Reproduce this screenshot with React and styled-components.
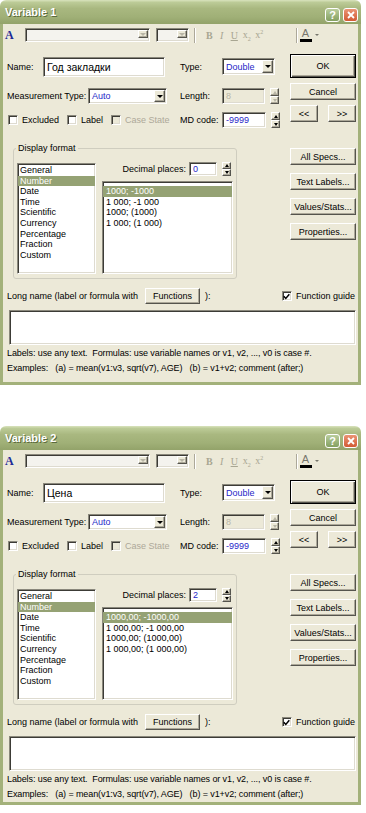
import React from "react";
import styled, { createGlobalStyle, css } from "styled-components";

const GlobalStyle = createGlobalStyle`
  html, body {
    margin: 0;
    padding: 0;
    background: #ffffff;
  }
  body {
    font-family: "Liberation Sans", Arial, sans-serif;
    font-size: 9px;
    color: #000;
  }
`;

const sunken = css`
  border: 1px solid;
  border-color: #8a887c #ffffff #ffffff #8a887c;
  box-shadow: inset 1px 1px 0 #3c3b36, inset -1px -1px 0 #dedbd0;
`;

const raised = css`
  border: 1px solid;
  border-color: #ffffff #55544d #55544d #ffffff;
  box-shadow: inset -1px -1px 0 #aca899;
`;

const Page = styled.div`
  width: 366px;
  display: flex;
  flex-direction: column;
  gap: 41px;
`;

const Window = styled.div`
  width: 361px;
  display: flex;
  flex-direction: column;
`;

const TitleBar = styled.div`
  height: 24px;
  box-sizing: border-box;
  display: flex;
  align-items: center;
  padding: 0 3px 0 5px;
  border-radius: 6px 6px 0 0;
  background: linear-gradient(
    #d9e3bd 0%,
    #bccb97 10%,
    #a9b880 35%,
    #a0b077 70%,
    #93a36a 100%
  );
`;

const Title = styled.div`
  flex: 1;
  font: bold 11px "Liberation Sans", Arial, sans-serif;
  color: #ffffff;
  text-shadow: 1px 1px 0 #5b6a3c;
`;

const CaptionButtons = styled.div`
  display: flex;
  gap: 3px;
  margin-top: 5px;
`;

const CaptionButton = styled.div`
  width: 15px;
  height: 14px;
  box-sizing: border-box;
  border: 1px solid #ffffff;
  border-radius: 3px;
  display: flex;
  align-items: center;
  justify-content: center;
  color: #ffffff;
  font: bold 11px "Liberation Sans", Arial, sans-serif;
  background: ${({ $close }) =>
    $close
      ? "linear-gradient(#eb9474, #d25a34)"
      : "linear-gradient(#b9cd9c, #84a062)"};
`;

const Frame = styled.div`
  background: #ece9d8;
  border: 3px solid #a3b17a;
  border-top: 0;
`;

const Toolbar = styled.div`
  height: 22px;
  display: flex;
  align-items: center;
  padding-left: 2px;
`;

const FontIcon = styled.span`
  width: 12px;
  font: bold 12px "Liberation Serif", serif;
  color: #1d2b96;
`;

const ToolCombo = styled.div`
  ${sunken}
  box-sizing: border-box;
  width: ${({ $w }) => $w}px;
  height: 14px;
  margin-left: ${({ $ml }) => $ml}px;
  background: #f4f3ee;
  display: flex;
  justify-content: flex-end;
  padding: 1px;
`;

const ToolSep = styled.span`
  width: 1px;
  height: 15px;
  margin-left: ${({ $ml }) => $ml}px;
  margin-right: ${({ $mr }) => $mr || 0}px;
  background: #aca899;
  box-shadow: 1px 0 0 #ffffff;
`;

const Glyph = styled.span`
  width: 12.5px;
  text-align: center;
  font-family: "Liberation Serif", serif;
  font-size: 10px;
  color: #a8a692;
  font-weight: ${({ $bold }) => ($bold ? "bold" : "normal")};
  font-style: ${({ $italic }) => ($italic ? "italic" : "normal")};
  text-decoration: ${({ $under }) => ($under ? "underline" : "none")};
  sub, sup {
    font-size: 6px;
  }
`;

const ColorA = styled.span`
  margin-left: 3px;
  width: 12px;
  display: flex;
  flex-direction: column;
  align-items: center;
  font: 11px "Liberation Sans", Arial, sans-serif;
  color: #77766c;
  line-height: 10px;
  &::after {
    content: "";
    width: 12px;
    height: 3px;
    background: #000000;
    margin-top: 1px;
  }
`;

const TinyArrow = styled.span`
  margin-left: 3px;
  width: 0;
  height: 0;
  border-left: 2px solid transparent;
  border-right: 2px solid transparent;
  border-top: 2px solid #77766c;
`;

const Body = styled.div`
  padding: 8px 2px ${({ $pb }) => $pb}px 4px;
`;

const TopArea = styled.div`
  display: flex;
  justify-content: space-between;
  align-items: flex-start;
`;

const Fields = styled.div`
  padding-top: 2px;
  display: flex;
  flex-direction: column;
`;

const FieldRow = styled.div`
  height: ${({ $h }) => $h}px;
  margin-top: ${({ $mt }) => $mt || 0}px;
  display: grid;
  grid-template-columns: 173px 42px auto;
  align-items: center;
`;

const Cell = styled.div`
  display: flex;
  align-items: center;
`;

const Label = styled.span`
  width: ${({ $w }) => ($w ? `${$w}px` : "auto")};
  flex-shrink: 0;
  margin-left: ${({ $ml }) => $ml || 0}px;
  color: ${({ $muted }) => ($muted ? "#aca899" : "#000")};
  white-space: nowrap;
`;

const TextBox = styled.div`
  ${sunken}
  box-sizing: border-box;
  width: ${({ $w }) => $w}px;
  height: ${({ $h }) => $h}px;
  background: ${({ $disabled }) => ($disabled ? "#ece9d8" : "#ffffff")};
  color: ${({ $disabled, $blue }) =>
    $disabled ? "#b8b5a6" : $blue ? "#2626c8" : "#000"};
  font-size: ${({ $fs }) => $fs || 9}px;
  display: flex;
  align-items: center;
  justify-content: space-between;
  padding: 0 1px 0 3px;
  white-space: nowrap;
  overflow: hidden;
`;

const DropButton = styled.span`
  ${raised}
  box-sizing: border-box;
  width: ${({ $w }) => $w || 11}px;
  height: calc(100% - 2px);
  background: #ece9d8;
  display: flex;
  align-items: center;
  justify-content: center;
  &::after {
    content: "";
    border-left: 3px solid transparent;
    border-right: 3px solid transparent;
    border-top: 3px solid ${({ $muted }) => ($muted ? "#b8b5a6" : "#000")};
  }
`;

const Spinner = styled.div`
  width: 9px;
  height: ${({ $h }) => $h || 16}px;
  margin-left: 5px;
  display: flex;
  flex-direction: column;
`;

const SpinHalf = styled.span`
  ${raised}
  box-sizing: border-box;
  flex: 1;
  background: #ece9d8;
  display: flex;
  align-items: center;
  justify-content: center;
  &::after {
    content: "";
    border-left: 2.5px solid transparent;
    border-right: 2.5px solid transparent;
    ${({ $up, $muted }) =>
      $up
        ? `border-bottom: 3px solid ${$muted ? "#b8b5a6" : "#000"};`
        : `border-top: 3px solid ${$muted ? "#b8b5a6" : "#000"};`}
  }
`;

const CheckRow = styled.div`
  display: flex;
  align-items: center;
  padding-left: 1px;
  gap: 8px;
`;

const CheckItem = styled.label`
  display: flex;
  align-items: center;
  gap: 4px;
  margin-right: ${({ $mr }) => $mr || 0}px;
  color: ${({ $muted }) => ($muted ? "#aca899" : "#000")};
  white-space: nowrap;
`;

const Box = styled.span`
  ${sunken}
  box-sizing: border-box;
  width: 10px;
  height: 10px;
  background: ${({ $disabled }) => ($disabled ? "#ece9d8" : "#ffffff")};
  display: flex;
  align-items: center;
  justify-content: center;
`;

const ButtonColumn = styled.div`
  width: 66px;
  display: flex;
  flex-direction: column;
  gap: ${({ $gap }) => $gap}px;
`;

const Button = styled.div`
  box-sizing: border-box;
  width: ${({ $w }) => $w || 66}px;
  height: ${({ $h }) => $h || 17}px;
  margin-left: ${({ $ml }) => $ml || 0}px;
  background: #ece9d8;
  display: flex;
  align-items: center;
  justify-content: center;
  font-size: 9px;
  white-space: nowrap;
  ${({ $default }) =>
    $default
      ? css`
          border: 1px solid #000;
          box-shadow: inset 1px 1px 0 #ffffff, inset -1px -1px 0 #55544d,
            inset -2px -2px 0 #aca899;
        `
      : raised}
`;

const ArrowRow = styled.div`
  display: flex;
  justify-content: space-between;
`;

const MidArea = styled.div`
  margin-top: 20px;
  display: flex;
  justify-content: space-between;
  align-items: flex-start;
`;

const GroupBox = styled.div`
  position: relative;
  box-sizing: border-box;
  margin-left: 6px;
  width: 224px;
  height: 131px;
  border: 1px solid #cfcdbf;
  border-radius: 3px;
  padding: 14px 3px 4px 3px;
  display: flex;
  gap: 6px;
`;

const GroupTitle = styled.span`
  position: absolute;
  top: -6px;
  left: 2px;
  padding: 0 2px;
  line-height: 11px;
  background: #ece9d8;
`;

const ListBox = styled.div`
  ${sunken}
  box-sizing: border-box;
  width: ${({ $w }) => $w}px;
  height: ${({ $h }) => $h}px;
  margin-top: ${({ $mt }) => $mt || 0}px;
  background: #ffffff;
  padding-top: ${({ $pt }) => $pt || 0}px;
  overflow: hidden;
`;

const ListItem = styled.div`
  height: 10.6px;
  line-height: 10.6px;
  padding-left: ${({ $indent }) => $indent}px;
  background: ${({ $selected }) => ($selected ? "#95a274" : "transparent")};
  color: ${({ $selected }) => ($selected ? "#ffffff" : "#000")};
  white-space: nowrap;
`;

const FormatSide = styled.div`
  width: 131px;
  display: flex;
  flex-direction: column;
`;

const DecimalRow = styled.div`
  height: 14px;
  margin-top: -1px;
  padding-right: 2px;
  display: flex;
  align-items: center;
  justify-content: flex-end;
  gap: 3px;
`;

const LongRow = styled.div`
  margin-top: 9px;
  height: 16px;
  display: flex;
  align-items: center;
`;

const Spacer = styled.div`
  flex: 1;
`;

const LongText = styled.div`
  ${sunken}
  box-sizing: border-box;
  margin: 6px 0 0 2px;
  width: 347px;
  height: 35px;
  background: #ffffff;
`;

const Help = styled.div`
  margin-top: 1px;
  line-height: 15px;
  letter-spacing: -0.1px;
  white-space: pre;
`;

const Check = () => (
  <svg width="7" height="7" viewBox="0 0 7 7">
    <path d="M0.8 3.2 L2.8 5.4 L6.3 1.2" fill="none" stroke="#000" strokeWidth="1.5" />
  </svg>
);

const CloseGlyph = () => (
  <svg width="8" height="8" viewBox="0 0 8 8">
    <path d="M1 1 L7 7 M7 1 L1 7" stroke="#fff" strokeWidth="1.8" />
  </svg>
);

const FORMATS = [
  "General",
  "Number",
  "Date",
  "Time",
  "Scientific",
  "Currency",
  "Percentage",
  "Fraction",
  "Custom",
];

const VariableDialog = ({ title, name, decimals, samples, bottom }) => (
  <Window>
    <TitleBar>
      <Title>{title}</Title>
      <CaptionButtons>
        <CaptionButton>?</CaptionButton>
        <CaptionButton $close>
          <CloseGlyph />
        </CaptionButton>
      </CaptionButtons>
    </TitleBar>
    <Frame>
      <Toolbar>
        <FontIcon>A</FontIcon>
        <ToolCombo $w={125} $ml={8}>
          <DropButton $w={10} $muted />
        </ToolCombo>
        <ToolCombo $w={33} $ml={6}>
          <DropButton $w={10} $muted />
        </ToolCombo>
        <ToolSep $ml={5} $mr={8} />
        <Glyph $bold>B</Glyph>
        <Glyph $italic>I</Glyph>
        <Glyph $under>U</Glyph>
        <Glyph>
          x<sub>2</sub>
        </Glyph>
        <Glyph>
          x<sup>2</sup>
        </Glyph>
        <ToolSep $ml={30} />
        <ColorA>A</ColorA>
        <TinyArrow />
      </Toolbar>
      <Body $pb={bottom}>
        <TopArea>
          <Fields>
            <FieldRow $h={21}>
              <Cell>
                <Label $w={36}>Name:</Label>
                <TextBox $w={122} $h={20} $fs={10.5}>
                  {name}
                </TextBox>
              </Cell>
              <Label>Type:</Label>
              <TextBox $w={53} $h={17} $blue>
                <span>Double</span>
                <DropButton />
              </TextBox>
            </FieldRow>
            <FieldRow $h={16} $mt={11}>
              <Cell>
                <Label $w={81}>Measurement Type:</Label>
                <TextBox $w={79} $h={16} $blue>
                  <span>Auto</span>
                  <DropButton />
                </TextBox>
              </Cell>
              <Label>Length:</Label>
              <Cell>
                <TextBox $w={43} $h={16} $disabled>
                  8
                </TextBox>
                <Spinner>
                  <SpinHalf $up $muted />
                  <SpinHalf $muted />
                </Spinner>
              </Cell>
            </FieldRow>
            <FieldRow $h={16} $mt={8}>
              <CheckRow>
                <CheckItem>
                  <Box />
                  Excluded
                </CheckItem>
                <CheckItem>
                  <Box />
                  Label
                </CheckItem>
                <CheckItem $muted>
                  <Box $disabled />
                  Case State
                </CheckItem>
              </CheckRow>
              <Label>MD code:</Label>
              <Cell>
                <TextBox $w={44} $h={16} $blue>
                  -9999
                </TextBox>
                <Spinner>
                  <SpinHalf $up />
                  <SpinHalf />
                </Spinner>
              </Cell>
            </FieldRow>
          </Fields>
          <ButtonColumn $gap={5}>
            <Button $default $h={24}>
              OK
            </Button>
            <Button>Cancel</Button>
            <ArrowRow>
              <Button $w={28}>&lt;&lt;</Button>
              <Button $w={28}>&gt;&gt;</Button>
            </ArrowRow>
          </ButtonColumn>
        </TopArea>
        <MidArea>
          <GroupBox>
            <GroupTitle>Display format</GroupTitle>
            <ListBox $w={79} $h={111} $pt={1}>
              {FORMATS.map((f) => (
                <ListItem key={f} $indent={2} $selected={f === "Number"}>
                  {f}
                </ListItem>
              ))}
            </ListBox>
            <FormatSide>
              <DecimalRow>
                <Label>Decimal places:</Label>
                <Cell>
                  <TextBox $w={28} $h={14} $blue>
                    {decimals}
                  </TextBox>
                  <Spinner $h={14}>
                    <SpinHalf $up />
                    <SpinHalf />
                  </Spinner>
                </Cell>
              </DecimalRow>
              <ListBox $w={131} $h={93} $mt={5} $pt={4}>
                {samples.map((s, i) => (
                  <ListItem key={s} $indent={3} $selected={i === 0}>
                    {s}
                  </ListItem>
                ))}
              </ListBox>
            </FormatSide>
          </GroupBox>
          <ButtonColumn $gap={8}>
            <Button>All Specs...</Button>
            <Button>Text Labels...</Button>
            <Button>Values/Stats...</Button>
            <Button>Properties...</Button>
          </ButtonColumn>
        </MidArea>
        <LongRow>
          <Label>Long name (label or formula with</Label>
          <Button $w={55} $h={16} $ml={7}>
            Functions
          </Button>
          <Label $ml={5}>):</Label>
          <Spacer />
          <CheckItem $mr={1}>
            <Box>
              <Check />
            </Box>
            Function guide
          </CheckItem>
        </LongRow>
        <LongText />
        <Help>
          {"Labels: use any text.  Formulas: use variable names or v1, v2, ..., v0 is case #.\n"}
          {"Examples:   (a) = mean(v1:v3, sqrt(v7), AGE)   (b) = v1+v2; comment (after;)"}
        </Help>
      </Body>
    </Frame>
  </Window>
);

export default function App() {
  return (
    <>
      <GlobalStyle />
      <Page>
        <VariableDialog
          title="Variable 1"
          name="Год закладки"
          decimals="0"
          samples={["1000; -1000", "1 000; -1 000", "1000; (1000)", "1 000; (1 000)"]}
          bottom={6}
        />
        <VariableDialog
          title="Variable 2"
          name="Цена"
          decimals="2"
          samples={[
            "1000,00; -1000,00",
            "1 000,00; -1 000,00",
            "1000,00; (1000,00)",
            "1 000,00; (1 000,00)",
          ]}
          bottom={0}
        />
      </Page>
    </>
  );
}
